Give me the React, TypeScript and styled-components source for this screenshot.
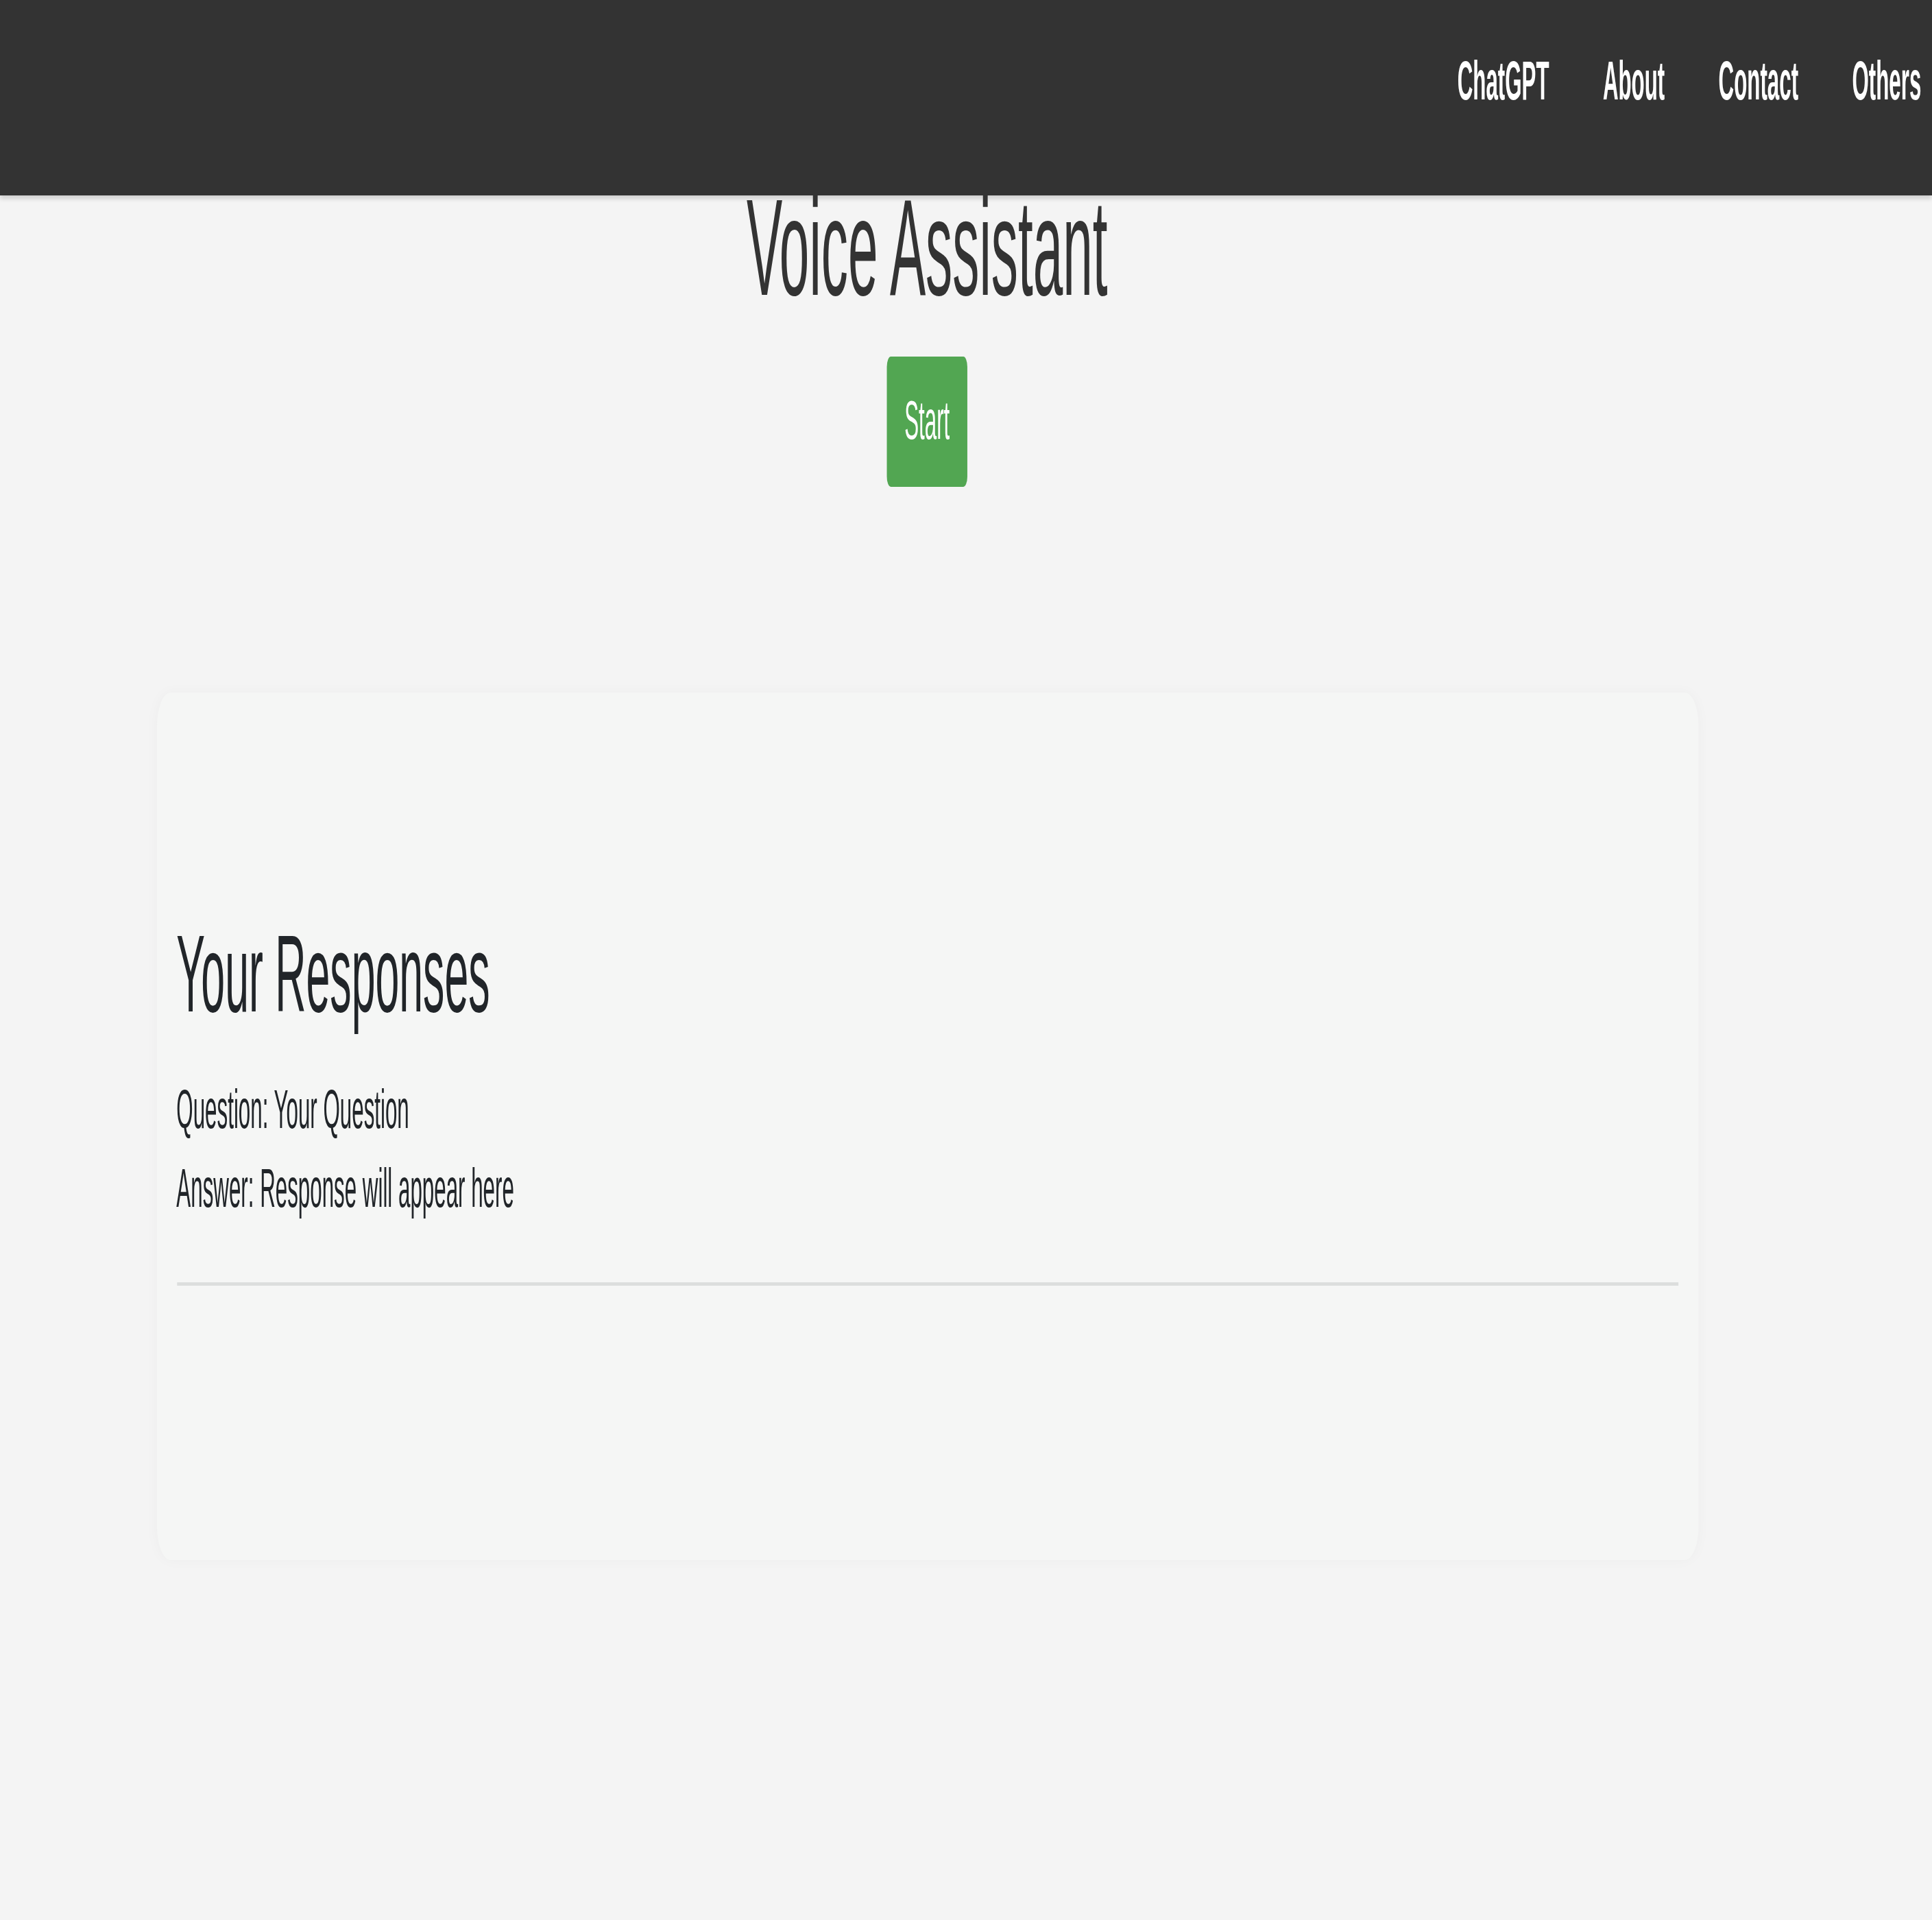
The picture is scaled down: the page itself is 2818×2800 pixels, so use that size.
import styled, { createGlobalStyle } from "styled-components";

// the reference is a 1440x560 page stretched to 2818x2800
const SCALE_X = 2818 / 1440;
const SCALE_Y = 2800 / 560;

const GlobalStyle = createGlobalStyle`
  html {
    overflow: hidden;
    background: #f4f4f4;
  }
  body {
    margin: 0;
    padding: 0;
    min-height: 2800px;
    background: #f4f4f4;
  }
  * {
    box-sizing: border-box;
  }
`;

const Stage = styled.div`
  width: 1440px;
  height: 560px;
  transform: scale(${SCALE_X}, ${SCALE_Y});
  transform-origin: 0 0;
  background: #f4f4f4;
  font-family: "Liberation Sans", Arial, sans-serif;
  color: #212529;
`;

const Header = styled.header`
  height: 57px;
  background: #333333;
  display: flex;
  justify-content: flex-end;
  align-items: flex-start;
  padding: 15px 8px 0 0;
  box-shadow: 0 1px 2px rgba(0, 0, 0, 0.15);
`;

const NavList = styled.nav`
  display: flex;
  gap: 40px;
`;

const NavLink = styled.a`
  color: #ffffff;
  font-size: 16px;
  font-weight: 700;
  text-decoration: none;
  cursor: pointer;
`;

const Main = styled.main`
  width: 1382px;
  display: flex;
  flex-direction: column;
  align-items: center;
`;

const Title = styled.h1`
  margin: -7px 0 0;
  font-size: 40px;
  font-weight: 400;
  color: #333333;
`;

const StartButton = styled.button`
  margin-top: 9px;
  padding: 10px 13px;
  background: #52a652;
  color: #ffffff;
  border: none;
  border-radius: 3px;
  font-family: inherit;
  font-size: 16px;
  line-height: normal;
  cursor: pointer;
`;

const Card = styled.section`
  margin-top: 60px;
  width: 1149px;
  padding: 64px 15px 80px;
  background: #f5f6f5;
  border-radius: 10px;
  box-shadow: 0 0 6px rgba(0, 0, 0, 0.03);
`;

const CardTitle = styled.h2`
  margin: 0 0 12px;
  font-size: 32px;
  font-weight: 400;
  color: #212529;
`;

const ResponseItem = styled.div`
  padding-bottom: 18px;
  border-bottom: 1px solid #dcdedd;
`;

const Line = styled.p`
  margin: 5px 0 0;
  font-size: 16px;
  color: #212529;
`;

const links = ["ChatGPT", "About", "Contact", "Others"];

export default function App() {
  return (
    <>
      <GlobalStyle />
      <Stage>
        <Header>
          <NavList>
            {links.map((l) => (
              <NavLink key={l}>{l}</NavLink>
            ))}
          </NavList>
        </Header>
        <Main>
          <Title>Voice Assistant</Title>
          <StartButton>Start</StartButton>
          <Card>
            <CardTitle>Your Responses</CardTitle>
            <ResponseItem>
              <Line>Question: Your Question</Line>
              <Line>Answer: Response will appear here</Line>
            </ResponseItem>
          </Card>
        </Main>
      </Stage>
    </>
  );
}
